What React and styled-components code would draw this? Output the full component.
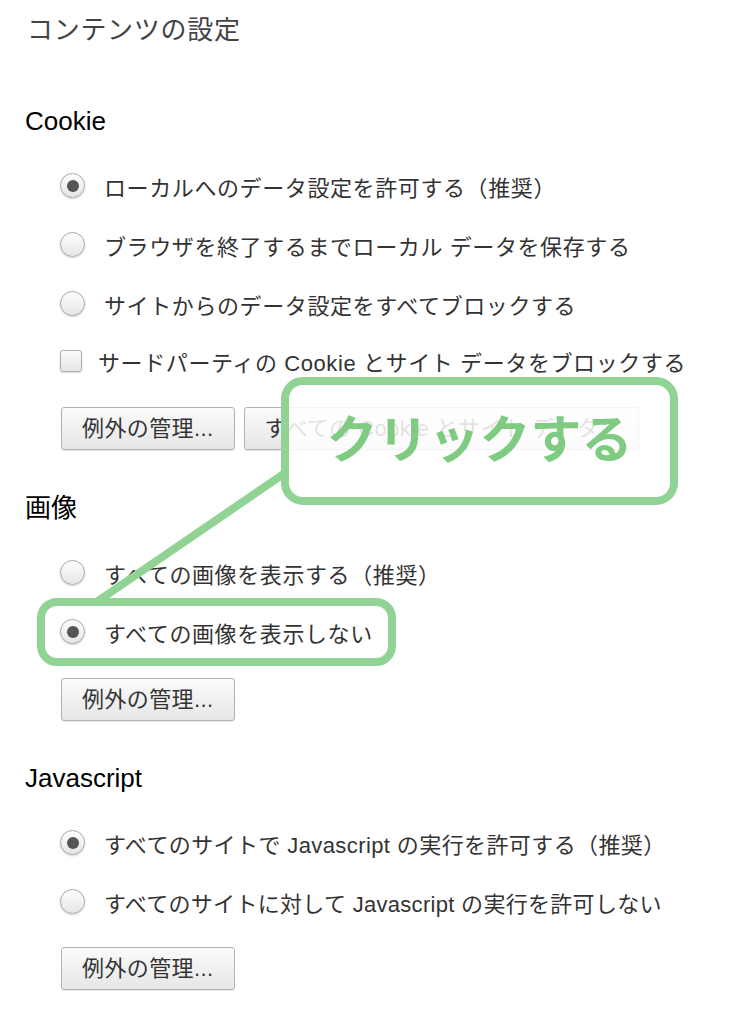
import React from "react";
import styled, { createGlobalStyle } from "styled-components";

const GlobalStyle = createGlobalStyle`
  html, body { margin: 0; padding: 0; background: #ffffff; }
  body {
    font-family: "Liberation Sans", "Noto Sans CJK JP", sans-serif;
    -webkit-font-smoothing: antialiased;
  }
`;

const Page = styled.div`
  position: relative;
  width: 750px;
  height: 1024px;
  overflow: hidden;
  padding: 13px 0 0 25px;
  box-sizing: border-box;
  background: #fff;
`;

const Title = styled.h1`
  margin: 0 0 0 2px;
  font-size: 26px;
  line-height: 34px;
  font-weight: 400;
  letter-spacing: 0.7px;
  color: #444;
`;

const Section = styled.section`
  margin-top: ${(p) => p.$top}px;
`;

const Heading = styled.h2`
  margin: 0;
  font-size: 26px;
  line-height: 32px;
  font-weight: 400;
  color: #000;
`;

const OptionList = styled.div`
  margin-top: 19px;
  padding-left: 35px;
  display: flex;
  flex-direction: column;
`;

const Row = styled.div`
  display: flex;
  align-items: center;
  height: ${(p) => p.$h || 59}px;
  gap: ${(p) => p.$gap || 19}px;
  font-size: 22px;
  letter-spacing: ${(p) => p.$ls ?? 0.6}px;
  color: #333;
  white-space: nowrap;
`;

const Radio = styled.span`
  position: relative;
  flex: none;
  width: 25px;
  height: 25px;
  border-radius: 50%;
  box-sizing: border-box;
  border: 1px solid #a9a9a9;
  background: linear-gradient(#fdfdfd, #e6e6e6);
  box-shadow: 0 1px 2px rgba(0, 0, 0, 0.18), inset 0 1px 0 #fff;
  &::after {
    content: "";
    display: ${(p) => (p.$checked ? "block" : "none")};
    position: absolute;
    left: 50%;
    top: 50%;
    width: 12px;
    height: 12px;
    margin: -6px 0 0 -6px;
    border-radius: 50%;
    background: #555;
  }
`;

const Checkbox = styled.span`
  flex: none;
  width: 22px;
  height: 22px;
  border-radius: 3px;
  box-sizing: border-box;
  border: 1px solid #aeaeae;
  background: linear-gradient(#fbfbfb, #e6e6e6);
  box-shadow: 0 1px 2px rgba(0, 0, 0, 0.14);
`;

const ButtonRow = styled.div`
  display: flex;
  gap: 9px;
  margin-top: ${(p) => p.$top ?? 19}px;
  padding-left: 36px;
`;

const Button = styled.button`
  height: 43px;
  padding: 0 ${(p) => p.$pad || 20}px;
  border: 1px solid #b2b2b2;
  border-radius: 3px;
  background: linear-gradient(#fbfbfb, #e6e6e6);
  box-shadow: 0 1px 1px rgba(0, 0, 0, 0.1);
  font-family: "Liberation Sans", "Noto Sans CJK JP", sans-serif;
  font-size: 22px;
  letter-spacing: 0.4px;
  color: #333;
  white-space: nowrap;
  line-height: 1;
`;

const Callout = styled.div`
  position: absolute;
  left: 281px;
  top: 377px;
  width: 397px;
  height: 128px;
  box-sizing: border-box;
  border: 8px solid #90d394;
  border-radius: 22px;
  background: rgba(255, 255, 255, 0.86);
  display: flex;
  align-items: center;
  justify-content: center;
  font-family: "Noto Sans CJK JP", sans-serif;
  font-weight: 700;
  font-size: 51px;
  line-height: 1;
  color: #7fcb82;
  padding-bottom: 10px;
`;

const Highlight = styled.div`
  position: absolute;
  left: 37px;
  top: 598px;
  width: 359px;
  height: 68px;
  box-sizing: border-box;
  border: 8px solid #90d394;
  border-radius: 20px;
`;

const Connector = styled.svg`
  position: absolute;
  left: 0;
  top: 0;
  width: 750px;
  height: 1024px;
  pointer-events: none;
`;

export default function App() {
  return (
    <>
      <GlobalStyle />
      <Page>
        <Title>コンテンツの設定</Title>

        <Section $top={58}>
          <Heading>Cookie</Heading>
          <OptionList>
            <Row>
              <Radio $checked />
              <span>ローカルへのデータ設定を許可する（推奨）</span>
            </Row>
            <Row>
              <Radio />
              <span>ブラウザを終了するまでローカル データを保存する</span>
            </Row>
            <Row>
              <Radio />
              <span>サイトからのデータ設定をすべてブロックする</span>
            </Row>
            <Row $h={55} $gap={16}>
              <Checkbox />
              <span>サードパーティの Cookie とサイト データをブロックする</span>
            </Row>
          </OptionList>
          <ButtonRow>
            <Button>例外の管理...</Button>
            <Button $pad={20}>すべての Cookie とサイト データ...</Button>
          </ButtonRow>
        </Section>

        <Section $top={42}>
          <Heading>画像</Heading>
          <OptionList>
            <Row>
              <Radio />
              <span>すべての画像を表示する（推奨）</span>
            </Row>
            <Row>
              <Radio $checked />
              <span>すべての画像を表示しない</span>
            </Row>
          </OptionList>
          <ButtonRow $top={17}>
            <Button>例外の管理...</Button>
          </ButtonRow>
        </Section>

        <Section $top={41}>
          <Heading>Javascript</Heading>
          <OptionList>
            <Row $ls={0.4}>
              <Radio $checked />
              <span>すべてのサイトで Javascript の実行を許可する（推奨）</span>
            </Row>
            <Row $ls={0.3}>
              <Radio />
              <span>すべてのサイトに対して Javascript の実行を許可しない</span>
            </Row>
          </OptionList>
          <ButtonRow $top={16}>
            <Button>例外の管理...</Button>
          </ButtonRow>
        </Section>

        <Connector viewBox="0 0 750 1024">
          <line x1="285" y1="473" x2="95" y2="603" stroke="#90d394" strokeWidth="8" />
        </Connector>
        <Highlight />
        <Callout>クリックする</Callout>
      </Page>
    </>
  );
}
